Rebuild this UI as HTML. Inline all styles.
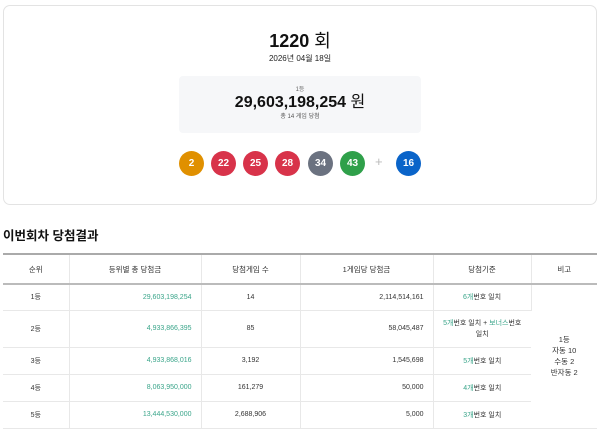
<!DOCTYPE html>
<html><head><meta charset="utf-8"><style>
*{margin:0;padding:0;box-sizing:border-box}
body{width:600px;height:432px;overflow:hidden;background:#fff;font-family:"Liberation Sans","Noto Sans CJK KR",sans-serif;color:#222;position:relative}
.card{position:absolute;left:3px;top:5px;width:594px;height:200px;border:1px solid #e3e3e3;border-radius:7px}
.t{position:absolute;left:0;width:600px;text-align:center;line-height:1}
.box{position:absolute;left:179px;top:76px;width:242px;height:57px;background:#f6f7f9;border-radius:4px}
.ball{position:absolute;top:151px;width:25px;height:25px;border-radius:50%;color:#fff;font-weight:bold;font-size:10px;line-height:25px;text-align:center}
table{position:absolute;left:3px;top:253px;width:594px;border-collapse:collapse;font-size:7px;color:#333}
td,th{border-bottom:1px solid #e8e8e8;border-right:1px solid #e8e8e8;text-align:center;font-weight:normal}
th{height:30px;font-size:7.5px;border-bottom:2px solid #bbb}
tr:first-child th{border-top:2px solid #aaa}
td:last-child,th:last-child{border-right:none}
.r{text-align:right;padding-right:9px}
.g{color:#3aa58a}
</style></head><body>
<div class="card"></div>
<div class="t" style="top:32px;font-size:18px;font-weight:bold;color:#111">1220 <span style="font-weight:normal">회</span></div>
<div class="t" style="top:55px;font-size:8px">2026년 04월 18일</div>
<div class="box"></div>
<div class="t" style="top:87px;font-size:6px;color:#666">1등</div>
<div class="t" style="top:95px;font-size:16px;font-weight:bold;color:#111">29,603,198,254 <span style="font-weight:normal">원</span></div>
<div class="t" style="top:114px;font-size:6px;color:#555">총 14 게임 당첨</div>
<div class="ball" style="left:179px;background:#e09000">2</div>
<div class="ball" style="left:211px;background:#d8334a">22</div>
<div class="ball" style="left:243px;background:#d8334a">25</div>
<div class="ball" style="left:275px;background:#d8334a">28</div>
<div class="ball" style="left:308px;background:#6b7280">34</div>
<div class="ball" style="left:340px;background:#2fa04a">43</div>
<div style="position:absolute;left:375px;top:155px;font-size:13px;line-height:1;color:#bbb">+</div>
<div class="ball" style="left:396px;background:#0a64c9">16</div>
<div style="position:absolute;left:3px;top:229px;font-size:12.5px;line-height:1.2;font-weight:bold;color:#111">이번회차 당첨결과</div>
<table>
<tr><th style="width:66px">순위</th><th style="width:132px">등위별 총 당첨금</th><th style="width:99px">당첨게임 수</th><th style="width:133px">1게임당 당첨금</th><th style="width:98px">당첨기준</th><th>비고</th></tr>
<tr style="height:26px"><td>1등</td><td class="r g">29,603,198,254</td><td>14</td><td class="r">2,114,514,161</td><td><span class="g">6개</span>번호 일치</td><td rowspan="5" style="font-size:7.5px;line-height:11px">1등<br>자동 10<br>수동 2<br>반자동 2</td></tr>
<tr style="height:37px"><td>2등</td><td class="r g">4,933,866,395</td><td>85</td><td class="r">58,045,487</td><td style="line-height:11px"><span class="g">5개</span>번호 일치 + <span class="g">보너스</span>번호<br>일치</td></tr>
<tr style="height:27px"><td>3등</td><td class="r g">4,933,868,016</td><td>3,192</td><td class="r">1,545,698</td><td><span class="g">5개</span>번호 일치</td></tr>
<tr style="height:27px"><td>4등</td><td class="r g">8,063,950,000</td><td>161,279</td><td class="r">50,000</td><td><span class="g">4개</span>번호 일치</td></tr>
<tr style="height:27px"><td>5등</td><td class="r g">13,444,530,000</td><td>2,688,906</td><td class="r">5,000</td><td><span class="g">3개</span>번호 일치</td></tr>
</table>
</body></html>
